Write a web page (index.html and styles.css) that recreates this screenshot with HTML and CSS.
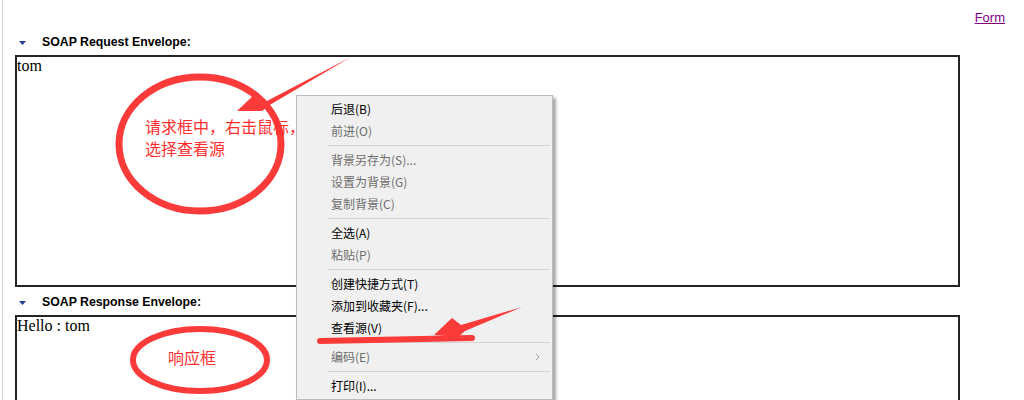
FILE: index.html
```html
<!DOCTYPE html>
<html lang="zh-CN">
<head>
    <meta charset="UTF-8">
    <title>SOAP Test</title>
    <link rel="stylesheet" href="styles.css">
</head>
<body>
    <div class="frame">
        <div class="top-bar">
            <a class="form-link" href="#">Form</a>
        </div>

        <section class="envelope">
            <h3 class="env-title">
                <svg class="toggle" width="7" height="4" viewBox="0 0 7 4"><polygon points="0,0 7,0 3.5,4" fill="#1f3f94"/></svg>
                SOAP Request Envelope:
            </h3>
            <div class="env-box">tom</div>
        </section>

        <section class="envelope">
            <h3 class="env-title">
                <svg class="toggle" width="7" height="4" viewBox="0 0 7 4"><polygon points="0,0 7,0 3.5,4" fill="#1f3f94"/></svg>
                SOAP Response Envelope:
            </h3>
            <div class="env-box">Hello : tom</div>
        </section>
    </div>

    <!-- hand drawn notes that sit under the menu -->
    <svg class="marks" width="1024" height="400" viewBox="0 0 1024 400">
        <ellipse cx="200" cy="144" rx="81" ry="67" fill="none" stroke="#fb3a3a" stroke-width="7"/>
        <polygon points="351,57 265,102 257,92 237,111 262,111 268,106" fill="#fb3a3a"/>
        <text class="note" x="145" y="133">请求框中，右击鼠标，</text>
        <text class="note" x="145" y="155">选择查看源</text>
        <ellipse cx="200" cy="360" rx="67" ry="31" fill="none" stroke="#fb3a3a" stroke-width="6"/>
        <text class="note" x="168" y="364">响应框</text>
    </svg>

    <ul class="context-menu">
        <li class="item">后退(B)</li>
        <li class="item disabled">前进(O)</li>
        <li class="sep"></li>
        <li class="item disabled">背景另存为(S)...</li>
        <li class="item disabled">设置为背景(G)</li>
        <li class="item disabled">复制背景(C)</li>
        <li class="sep"></li>
        <li class="item">全选(A)</li>
        <li class="item disabled">粘贴(P)</li>
        <li class="sep"></li>
        <li class="item">创建快捷方式(T)</li>
        <li class="item">添加到收藏夹(F)...</li>
        <li class="item">查看源(V)</li>
        <li class="sep"></li>
        <li class="item disabled has-sub">编码(E)
            <svg class="chevron" width="5" height="8" viewBox="0 0 5 8"><polyline points="1,1 4,4 1,7" fill="none" stroke="#a0a0a0" stroke-width="1"/></svg>
        </li>
        <li class="sep"></li>
        <li class="item">打印(I)...</li>
    </ul>

    <!-- notes drawn over the menu -->
    <svg class="marks" width="1024" height="400" viewBox="0 0 1024 400">
        <polygon points="522,307 461,325 452,318 434,335 458,337 465,331" fill="#fb3a3a"/>
        <path d="M320 341 L472 338" fill="none" stroke="#fb3a3a" stroke-width="6" stroke-linecap="round"/>
    </svg>
</body>
</html>
```

FILE: styles.css
```css
body {
    margin: 0;
    padding: 0;
    background-color: #fff;
    overflow: hidden;
    height: 400px;
    position: relative;
}

.frame {
    margin-left: 2px;
    border-left: 1px solid #cfcfcf;
    height: 400px;
    padding-left: 12px;
}

.top-bar {
    padding: 10px 19px 2px 0;
    height: 15px;
    text-align: right;
    font-family: "Liberation Sans", Arial, sans-serif;
    font-size: 13px;
    line-height: 15px;
}

.form-link {
    color: #800080;
    text-decoration: underline;
}

.env-title {
    display: flex;
    align-items: center;
    margin: 8px 0 6px 0;
    height: 14px;
    font-family: "Liberation Sans", Arial, sans-serif;
    font-size: 12.3px;
    line-height: 14px;
    font-weight: bold;
    color: #000;
}

.toggle {
    margin: 2px 16px 0 4px;
}

.env-box {
    width: 941px;
    height: 228px;
    border: 2px solid #242424;
    font-family: "Liberation Serif", "Times New Roman", serif;
    font-size: 16px;
    color: #000;
    padding: 0;
}

.marks {
    position: absolute;
    top: 0;
    left: 0;
    pointer-events: none;
}

.note {
    font-family: "Noto Sans CJK SC", sans-serif;
    font-size: 16px;
    fill: #ff2e2e;
}

.context-menu {
    position: absolute;
    left: 296px;
    top: 95px;
    width: 251px;
    margin: 0;
    padding: 2px;
    list-style: none;
    background-color: #f0f0f0;
    border: 1px solid #bababa;
    box-shadow: 3px 3px 3px rgba(0, 0, 0, 0.35);
    font-family: "Noto Sans CJK SC", sans-serif;
    font-size: 12px;
    color: #000;
}

.context-menu .item {
    height: 22px;
    line-height: 22px;
    padding-left: 32px;
    position: relative;
}

.context-menu .disabled {
    color: #6d6d6d;
}

.context-menu .sep {
    height: 1px;
    margin: 3px 0 3px 28px;
    background-color: #d5d5d5;
}

.chevron {
    position: absolute;
    right: 10px;
    top: 7px;
}
```
